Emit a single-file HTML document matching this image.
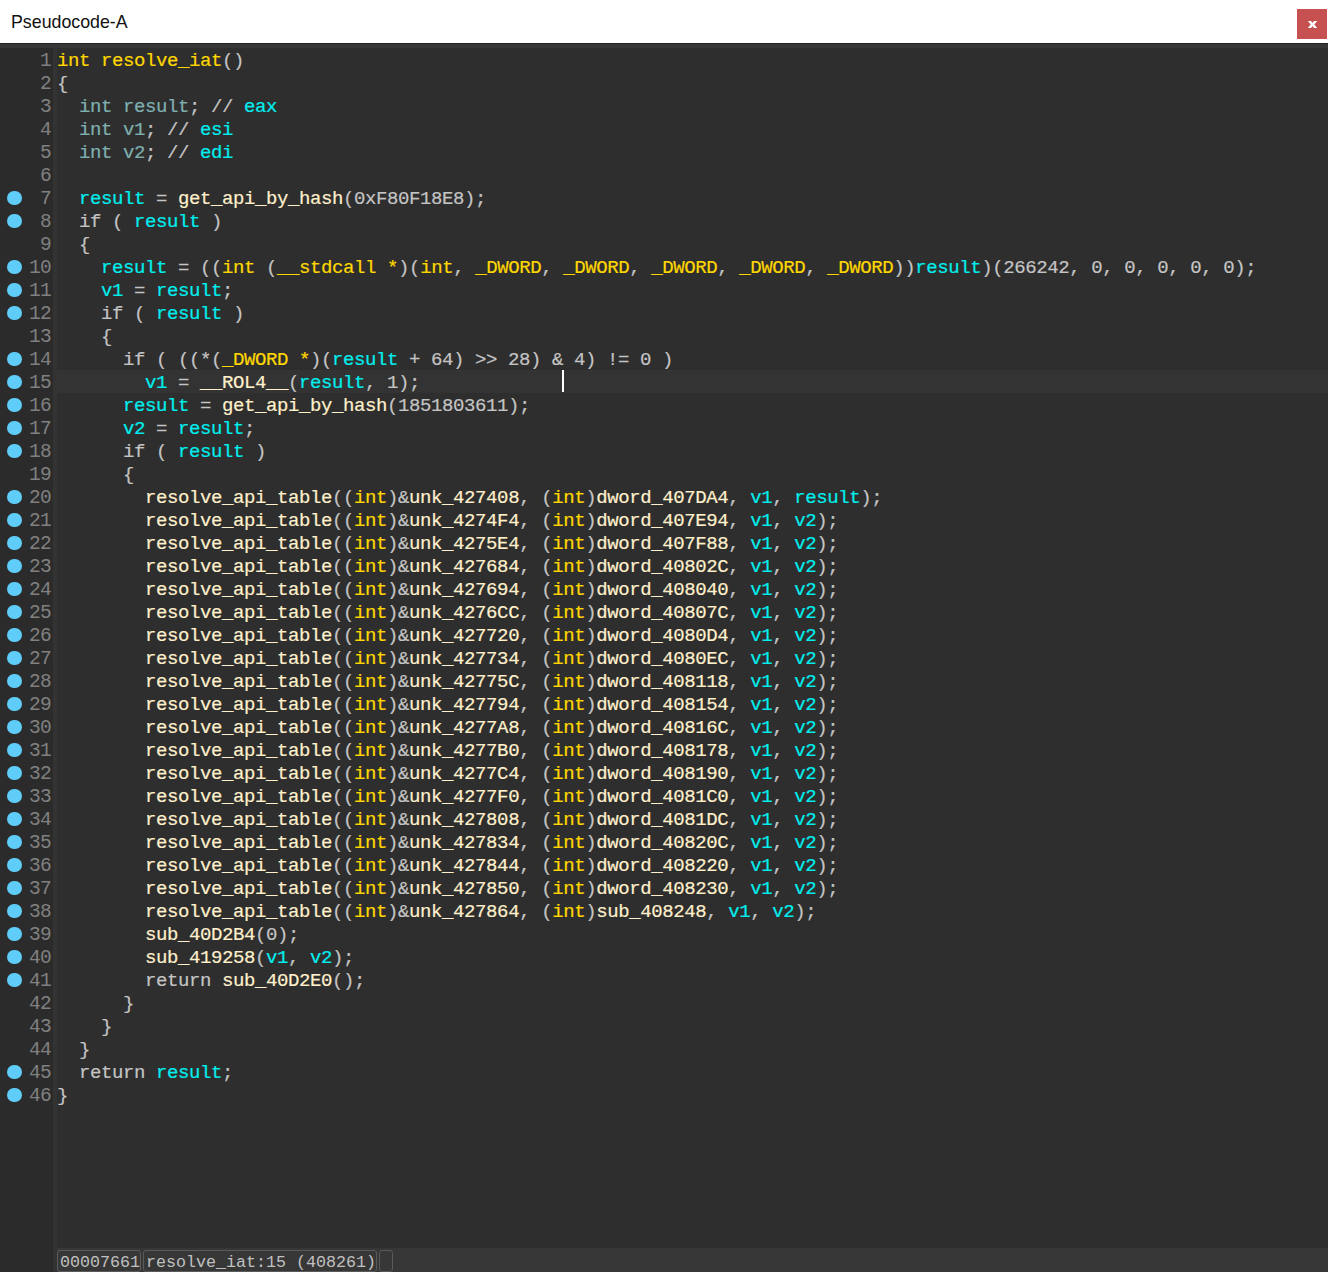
<!DOCTYPE html>
<html><head><meta charset="utf-8">
<style>
html,body{margin:0;padding:0;}
body{width:1328px;height:1272px;position:relative;overflow:hidden;background:#2e2e2e;}
#title{position:absolute;left:0;top:0;width:1328px;height:43px;background:#fff;}
#title .t{position:absolute;left:11px;top:10px;font-family:"Liberation Sans",sans-serif;font-size:17.8px;color:#111;line-height:24px;white-space:pre;}
#close{position:absolute;left:1297px;top:9px;width:30px;height:30px;background:#c75050;}
#topline{position:absolute;left:0;top:43px;width:1328px;height:1px;background:#232323;}
#band{position:absolute;left:0;top:44px;width:1328px;height:4px;background:#363636;}
#gutter{position:absolute;left:0;top:48px;width:53px;height:1224px;background:#2b2b2b;}
#sep{position:absolute;left:53px;top:48px;width:4px;height:1224px;background:#333333;}
#code{position:absolute;left:57px;top:48px;width:1271px;height:1200px;background:#2e2e2e;}
#hl{position:absolute;left:57px;top:370px;width:1271px;height:23px;background:#333333;}
#cursor{position:absolute;left:562px;top:370px;width:2px;height:22px;background:#fff;}
.ln{position:absolute;left:57px;height:23px;line-height:23px;font-family:"Liberation Mono",monospace;font-size:19px;letter-spacing:-0.4px;color:#c4c4c4;white-space:pre;-webkit-text-stroke:0.2px currentColor;}
.nm{position:absolute;left:0;width:51px;text-align:right;height:23px;line-height:23px;font-family:"Liberation Mono",monospace;font-size:19.5px;letter-spacing:-0.7px;color:#808080;white-space:pre;}
.dt{position:absolute;left:7.25px;width:14.5px;height:14.5px;border-radius:50%;background:#5fcdf8;}
.y{color:#ffd700;}
.c{color:#00eeee;}
.f{color:#fff0cc;}
.t{color:#7fb0b0;}
#status{position:absolute;left:57px;top:1248px;width:1271px;height:24px;background:#373737;}
.box{position:absolute;top:1250px;height:22px;padding-top:1px;border:1px solid #5a5a5a;border-radius:3px;box-sizing:border-box;font-family:"Liberation Mono",monospace;font-size:16.667px;color:#c0c0c0;line-height:22px;white-space:pre;padding-left:2px;}
</style></head><body>
<div id="title"><div class="t">Pseudocode-A</div><div id="close"><svg width="30" height="30" viewBox="0 0 30 30"><path d="M10.8 11.9 L14.1 11.9 L15.5 14 L16.9 11.9 L20.2 11.9 L17.3 15.4 L20.2 19 L16.9 19 L15.5 16.9 L14.1 19 L10.8 19 L13.7 15.4 Z" fill="#fff"/></svg></div></div>
<div id="topline"></div>
<div id="band"></div>
<div id="gutter"></div>
<div id="sep"></div>
<div id="code"></div>
<div id="hl"></div>
<div class="nm" style="top:50px">1</div>
<div class="nm" style="top:73px">2</div>
<div class="nm" style="top:96px">3</div>
<div class="nm" style="top:119px">4</div>
<div class="nm" style="top:142px">5</div>
<div class="nm" style="top:165px">6</div>
<div class="nm" style="top:188px">7</div>
<div class="nm" style="top:211px">8</div>
<div class="nm" style="top:234px">9</div>
<div class="nm" style="top:257px">10</div>
<div class="nm" style="top:280px">11</div>
<div class="nm" style="top:303px">12</div>
<div class="nm" style="top:326px">13</div>
<div class="nm" style="top:349px">14</div>
<div class="nm" style="top:372px">15</div>
<div class="nm" style="top:395px">16</div>
<div class="nm" style="top:418px">17</div>
<div class="nm" style="top:441px">18</div>
<div class="nm" style="top:464px">19</div>
<div class="nm" style="top:487px">20</div>
<div class="nm" style="top:510px">21</div>
<div class="nm" style="top:533px">22</div>
<div class="nm" style="top:556px">23</div>
<div class="nm" style="top:579px">24</div>
<div class="nm" style="top:602px">25</div>
<div class="nm" style="top:625px">26</div>
<div class="nm" style="top:648px">27</div>
<div class="nm" style="top:671px">28</div>
<div class="nm" style="top:694px">29</div>
<div class="nm" style="top:717px">30</div>
<div class="nm" style="top:740px">31</div>
<div class="nm" style="top:763px">32</div>
<div class="nm" style="top:786px">33</div>
<div class="nm" style="top:809px">34</div>
<div class="nm" style="top:832px">35</div>
<div class="nm" style="top:855px">36</div>
<div class="nm" style="top:878px">37</div>
<div class="nm" style="top:901px">38</div>
<div class="nm" style="top:924px">39</div>
<div class="nm" style="top:947px">40</div>
<div class="nm" style="top:970px">41</div>
<div class="nm" style="top:993px">42</div>
<div class="nm" style="top:1016px">43</div>
<div class="nm" style="top:1039px">44</div>
<div class="nm" style="top:1062px">45</div>
<div class="nm" style="top:1085px">46</div>
<div class="dt" style="top:190.5px"></div>
<div class="dt" style="top:213.5px"></div>
<div class="dt" style="top:259.5px"></div>
<div class="dt" style="top:282.5px"></div>
<div class="dt" style="top:305.5px"></div>
<div class="dt" style="top:351.5px"></div>
<div class="dt" style="top:374.5px"></div>
<div class="dt" style="top:397.5px"></div>
<div class="dt" style="top:420.5px"></div>
<div class="dt" style="top:443.5px"></div>
<div class="dt" style="top:489.5px"></div>
<div class="dt" style="top:512.5px"></div>
<div class="dt" style="top:535.5px"></div>
<div class="dt" style="top:558.5px"></div>
<div class="dt" style="top:581.5px"></div>
<div class="dt" style="top:604.5px"></div>
<div class="dt" style="top:627.5px"></div>
<div class="dt" style="top:650.5px"></div>
<div class="dt" style="top:673.5px"></div>
<div class="dt" style="top:696.5px"></div>
<div class="dt" style="top:719.5px"></div>
<div class="dt" style="top:742.5px"></div>
<div class="dt" style="top:765.5px"></div>
<div class="dt" style="top:788.5px"></div>
<div class="dt" style="top:811.5px"></div>
<div class="dt" style="top:834.5px"></div>
<div class="dt" style="top:857.5px"></div>
<div class="dt" style="top:880.5px"></div>
<div class="dt" style="top:903.5px"></div>
<div class="dt" style="top:926.5px"></div>
<div class="dt" style="top:949.5px"></div>
<div class="dt" style="top:972.5px"></div>
<div class="dt" style="top:1064.5px"></div>
<div class="dt" style="top:1087.5px"></div>
<div class="ln" style="top:50px"><span class="y">int resolve_iat</span>()</div>
<div class="ln" style="top:73px">{</div>
<div class="ln" style="top:96px">  <span class="t">int result</span>; // <span class="c">eax</span></div>
<div class="ln" style="top:119px">  <span class="t">int v1</span>; // <span class="c">esi</span></div>
<div class="ln" style="top:142px">  <span class="t">int v2</span>; // <span class="c">edi</span></div>
<div class="ln" style="top:165px"></div>
<div class="ln" style="top:188px">  <span class="c">result</span> = <span class="f">get_api_by_hash</span>(0xF80F18E8);</div>
<div class="ln" style="top:211px">  if ( <span class="c">result</span> )</div>
<div class="ln" style="top:234px">  {</div>
<div class="ln" style="top:257px">    <span class="c">result</span> = ((<span class="y">int</span> (<span class="y">__stdcall *</span>)(<span class="y">int</span>, <span class="y">_DWORD</span>, <span class="y">_DWORD</span>, <span class="y">_DWORD</span>, <span class="y">_DWORD</span>, <span class="y">_DWORD</span>))<span class="c">result</span>)(266242, 0, 0, 0, 0, 0);</div>
<div class="ln" style="top:280px">    <span class="c">v1</span> = <span class="c">result</span>;</div>
<div class="ln" style="top:303px">    if ( <span class="c">result</span> )</div>
<div class="ln" style="top:326px">    {</div>
<div class="ln" style="top:349px">      if ( ((*(<span class="y">_DWORD *</span>)(<span class="c">result</span> + 64) &gt;&gt; 28) &amp; 4) != 0 )</div>
<div class="ln" style="top:372px">        <span class="c">v1</span> = <span class="f">__ROL4__</span>(<span class="c">result</span>, 1);</div>
<div class="ln" style="top:395px">      <span class="c">result</span> = <span class="f">get_api_by_hash</span>(1851803611);</div>
<div class="ln" style="top:418px">      <span class="c">v2</span> = <span class="c">result</span>;</div>
<div class="ln" style="top:441px">      if ( <span class="c">result</span> )</div>
<div class="ln" style="top:464px">      {</div>
<div class="ln" style="top:487px">        <span class="f">resolve_api_table</span>((<span class="y">int</span>)&amp;<span class="f">unk_427408</span>, (<span class="y">int</span>)<span class="f">dword_407DA4</span>, <span class="c">v1</span>, <span class="c">result</span>);</div>
<div class="ln" style="top:510px">        <span class="f">resolve_api_table</span>((<span class="y">int</span>)&amp;<span class="f">unk_4274F4</span>, (<span class="y">int</span>)<span class="f">dword_407E94</span>, <span class="c">v1</span>, <span class="c">v2</span>);</div>
<div class="ln" style="top:533px">        <span class="f">resolve_api_table</span>((<span class="y">int</span>)&amp;<span class="f">unk_4275E4</span>, (<span class="y">int</span>)<span class="f">dword_407F88</span>, <span class="c">v1</span>, <span class="c">v2</span>);</div>
<div class="ln" style="top:556px">        <span class="f">resolve_api_table</span>((<span class="y">int</span>)&amp;<span class="f">unk_427684</span>, (<span class="y">int</span>)<span class="f">dword_40802C</span>, <span class="c">v1</span>, <span class="c">v2</span>);</div>
<div class="ln" style="top:579px">        <span class="f">resolve_api_table</span>((<span class="y">int</span>)&amp;<span class="f">unk_427694</span>, (<span class="y">int</span>)<span class="f">dword_408040</span>, <span class="c">v1</span>, <span class="c">v2</span>);</div>
<div class="ln" style="top:602px">        <span class="f">resolve_api_table</span>((<span class="y">int</span>)&amp;<span class="f">unk_4276CC</span>, (<span class="y">int</span>)<span class="f">dword_40807C</span>, <span class="c">v1</span>, <span class="c">v2</span>);</div>
<div class="ln" style="top:625px">        <span class="f">resolve_api_table</span>((<span class="y">int</span>)&amp;<span class="f">unk_427720</span>, (<span class="y">int</span>)<span class="f">dword_4080D4</span>, <span class="c">v1</span>, <span class="c">v2</span>);</div>
<div class="ln" style="top:648px">        <span class="f">resolve_api_table</span>((<span class="y">int</span>)&amp;<span class="f">unk_427734</span>, (<span class="y">int</span>)<span class="f">dword_4080EC</span>, <span class="c">v1</span>, <span class="c">v2</span>);</div>
<div class="ln" style="top:671px">        <span class="f">resolve_api_table</span>((<span class="y">int</span>)&amp;<span class="f">unk_42775C</span>, (<span class="y">int</span>)<span class="f">dword_408118</span>, <span class="c">v1</span>, <span class="c">v2</span>);</div>
<div class="ln" style="top:694px">        <span class="f">resolve_api_table</span>((<span class="y">int</span>)&amp;<span class="f">unk_427794</span>, (<span class="y">int</span>)<span class="f">dword_408154</span>, <span class="c">v1</span>, <span class="c">v2</span>);</div>
<div class="ln" style="top:717px">        <span class="f">resolve_api_table</span>((<span class="y">int</span>)&amp;<span class="f">unk_4277A8</span>, (<span class="y">int</span>)<span class="f">dword_40816C</span>, <span class="c">v1</span>, <span class="c">v2</span>);</div>
<div class="ln" style="top:740px">        <span class="f">resolve_api_table</span>((<span class="y">int</span>)&amp;<span class="f">unk_4277B0</span>, (<span class="y">int</span>)<span class="f">dword_408178</span>, <span class="c">v1</span>, <span class="c">v2</span>);</div>
<div class="ln" style="top:763px">        <span class="f">resolve_api_table</span>((<span class="y">int</span>)&amp;<span class="f">unk_4277C4</span>, (<span class="y">int</span>)<span class="f">dword_408190</span>, <span class="c">v1</span>, <span class="c">v2</span>);</div>
<div class="ln" style="top:786px">        <span class="f">resolve_api_table</span>((<span class="y">int</span>)&amp;<span class="f">unk_4277F0</span>, (<span class="y">int</span>)<span class="f">dword_4081C0</span>, <span class="c">v1</span>, <span class="c">v2</span>);</div>
<div class="ln" style="top:809px">        <span class="f">resolve_api_table</span>((<span class="y">int</span>)&amp;<span class="f">unk_427808</span>, (<span class="y">int</span>)<span class="f">dword_4081DC</span>, <span class="c">v1</span>, <span class="c">v2</span>);</div>
<div class="ln" style="top:832px">        <span class="f">resolve_api_table</span>((<span class="y">int</span>)&amp;<span class="f">unk_427834</span>, (<span class="y">int</span>)<span class="f">dword_40820C</span>, <span class="c">v1</span>, <span class="c">v2</span>);</div>
<div class="ln" style="top:855px">        <span class="f">resolve_api_table</span>((<span class="y">int</span>)&amp;<span class="f">unk_427844</span>, (<span class="y">int</span>)<span class="f">dword_408220</span>, <span class="c">v1</span>, <span class="c">v2</span>);</div>
<div class="ln" style="top:878px">        <span class="f">resolve_api_table</span>((<span class="y">int</span>)&amp;<span class="f">unk_427850</span>, (<span class="y">int</span>)<span class="f">dword_408230</span>, <span class="c">v1</span>, <span class="c">v2</span>);</div>
<div class="ln" style="top:901px">        <span class="f">resolve_api_table</span>((<span class="y">int</span>)&amp;<span class="f">unk_427864</span>, (<span class="y">int</span>)<span class="f">sub_408248</span>, <span class="c">v1</span>, <span class="c">v2</span>);</div>
<div class="ln" style="top:924px">        <span class="f">sub_40D2B4</span>(0);</div>
<div class="ln" style="top:947px">        <span class="f">sub_419258</span>(<span class="c">v1</span>, <span class="c">v2</span>);</div>
<div class="ln" style="top:970px">        return <span class="f">sub_40D2E0</span>();</div>
<div class="ln" style="top:993px">      }</div>
<div class="ln" style="top:1016px">    }</div>
<div class="ln" style="top:1039px">  }</div>
<div class="ln" style="top:1062px">  return <span class="c">result</span>;</div>
<div class="ln" style="top:1085px">}</div>
<div id="cursor"></div>
<div id="status"></div>
<div class="box" style="left:57px;width:84px;">00007661</div>
<div class="box" style="left:143px;width:234px;">resolve_iat:15 (408261)</div>
<div class="box" style="left:379px;width:14px;"></div>
</body></html>
